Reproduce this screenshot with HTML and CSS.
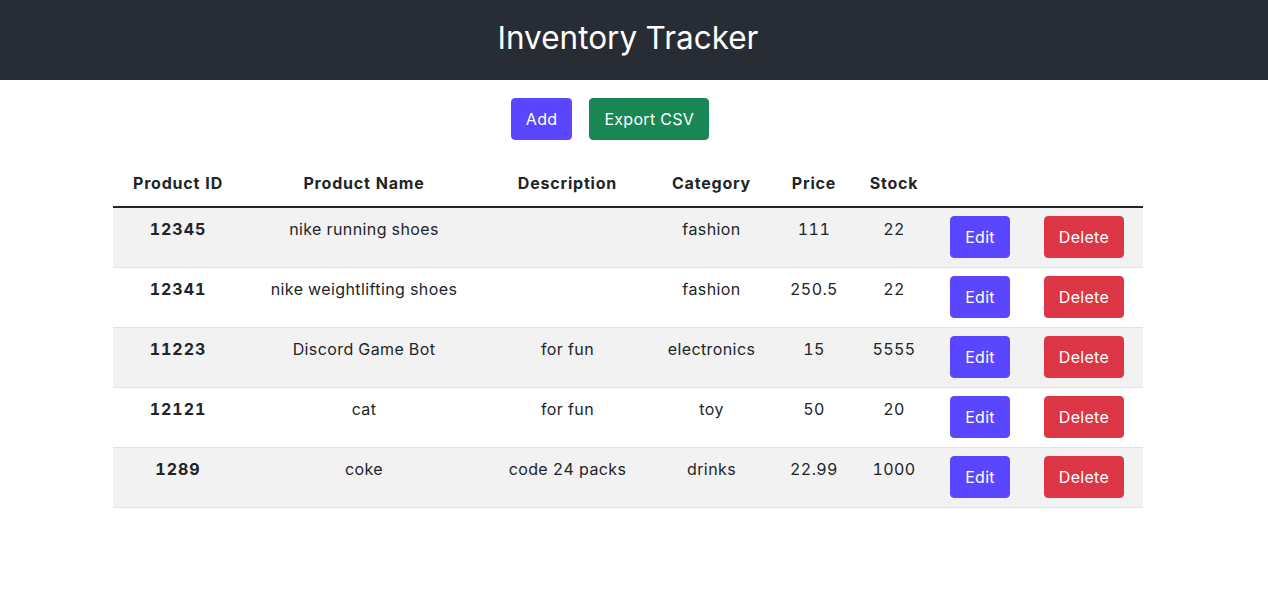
FILE: index.html
```html
<!DOCTYPE html>
<html lang="en">
<head>
<meta charset="utf-8">
<title>Inventory Tracker</title>
<link rel="stylesheet" href="styles.css">
</head>
<body>
<header class="app-header">
  <h1 class="app-title">Inventory Tracker</h1>
</header>
<main class="content">
  <div class="toolbar">
    <button class="btn btn-primary">Add</button>
    <button class="btn btn-success">Export CSV</button>
  </div>
  <table class="inventory">
    <colgroup>
      <col class="c-id"><col class="c-name"><col class="c-desc"><col class="c-cat">
      <col class="c-price"><col class="c-stock"><col class="c-edit"><col class="c-del">
    </colgroup>
    <thead>
      <tr>
        <th>Product ID</th><th>Product Name</th><th>Description</th><th>Category</th>
        <th>Price</th><th>Stock</th><th></th><th></th>
      </tr>
    </thead>
    <tbody>
      <tr>
        <th class="row-id">12345</th><td>nike running shoes</td><td></td><td>fashion</td><td>111</td><td>22</td>
        <td class="act"><button class="btn btn-primary">Edit</button></td><td class="act"><button class="btn btn-danger">Delete</button></td>
      </tr>
      <tr>
        <th class="row-id">12341</th><td>nike weightlifting shoes</td><td></td><td>fashion</td><td>250.5</td><td>22</td>
        <td class="act"><button class="btn btn-primary">Edit</button></td><td class="act"><button class="btn btn-danger">Delete</button></td>
      </tr>
      <tr>
        <th class="row-id">11223</th><td>Discord Game Bot</td><td>for fun</td><td>electronics</td><td>15</td><td>5555</td>
        <td class="act"><button class="btn btn-primary">Edit</button></td><td class="act"><button class="btn btn-danger">Delete</button></td>
      </tr>
      <tr>
        <th class="row-id">12121</th><td>cat</td><td>for fun</td><td>toy</td><td>50</td><td>20</td>
        <td class="act"><button class="btn btn-primary">Edit</button></td><td class="act"><button class="btn btn-danger">Delete</button></td>
      </tr>
      <tr>
        <th class="row-id">1289</th><td>coke</td><td>code 24 packs</td><td>drinks</td><td>22.99</td><td>1000</td>
        <td class="act"><button class="btn btn-primary">Edit</button></td><td class="act"><button class="btn btn-danger">Delete</button></td>
      </tr>
    </tbody>
  </table>
</main>
</body>
</html>
```

FILE: styles.css
```css
* { box-sizing: border-box; }

body {
  margin: 0;
  font-family: Inter, "Noto Sans", "Liberation Sans", sans-serif;
  font-size: 16px;
  line-height: 1.5;
  letter-spacing: 0.4px;
  font-variant-numeric: tabular-nums;
  color: #212529;
  background: #fff;
}

.app-header {
  height: 80px;
  background: #282c34;
  display: flex;
  align-items: center;
  justify-content: center;
  padding-right: 12px;
}

.app-title {
  margin: 0 0 5px;
  font-size: 31.5px;
  font-weight: 400;
  letter-spacing: 0;
  color: #fff;
  line-height: 1.2;
}

.content {
  padding-right: 12px;
}

.toolbar {
  display: flex;
  justify-content: center;
  gap: 17px;
  margin-top: 18px;
  margin-bottom: 23px;
  padding-right: 36px;
}

.btn {
  font-family: inherit;
  font-size: 16px;
  line-height: 24px;
  letter-spacing: 0.3px;
  padding: 8px 14px;
  border: 1px solid transparent;
  border-radius: 4px;
  color: #fff;
  cursor: pointer;
}

.btn-primary { background: #5a46ff; border-color: #5a46ff; }
.btn-success { background: #198754; border-color: #198754; }
.btn-danger { background: #dc3545; border-color: #dc3545; }

.inventory {
  width: 1030px;
  margin: 0 auto;
  border-collapse: collapse;
  table-layout: fixed;
}

.c-id { width: 130px; }
.c-name { width: 242px; }
.c-desc { width: 165px; }
.c-cat { width: 123px; }
.c-price { width: 82px; }
.c-stock { width: 78px; }
.c-edit { width: 94px; }
.c-del { width: 116px; }

.inventory th,
.inventory td {
  padding: 9px 8px 9px;
  text-align: center;
  vertical-align: top;
  font-weight: 400;
}

.inventory td.act {
  padding: 8px 8px 9px;
}

.inventory td.act .btn-danger {
  margin-right: 2px;
}

.inventory thead th {
  font-weight: 700;
  letter-spacing: 0.8px;
  border-bottom: 2px solid #212529;
  padding: 8px 8px 11px;
}

.inventory tbody tr {
  border-bottom: 1px solid #dee2e6;
}

.inventory tbody tr:nth-child(odd) {
  background: #f2f2f2;
}

.inventory .row-id {
  font-weight: 700;
  letter-spacing: 1px;
}
```
